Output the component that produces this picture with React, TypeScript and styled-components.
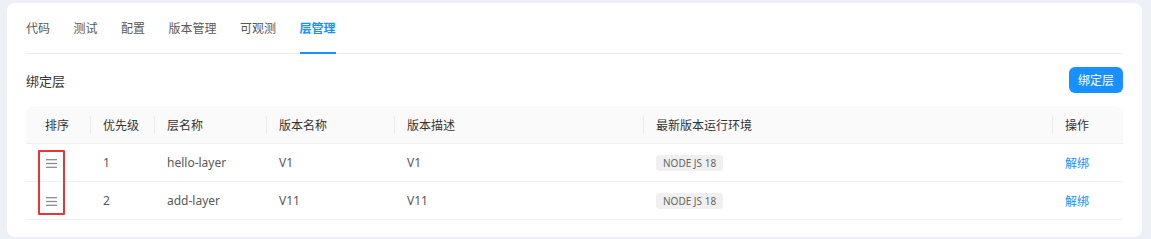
import styled, { createGlobalStyle } from "styled-components";

const GlobalStyle = createGlobalStyle`
  html, body {
    margin: 0;
    padding: 0;
    background: #edf1f7;
    font-family: "Noto Sans", "Noto Sans CJK SC", sans-serif;
  }
`;

type Layer = {
  priority: number;
  name: string;
  version: string;
  desc: string;
  runtime: string;
};

const layers: Layer[] = [
  { priority: 1, name: "hello-layer", version: "V1", desc: "V1", runtime: "NODE JS 18" },
  { priority: 2, name: "add-layer", version: "V11", desc: "V11", runtime: "NODE JS 18" },
];

const tabs = ["代码", "测试", "配置", "版本管理", "可观测", "层管理"];

const columns = [
  { title: "排序", width: 64, center: true },
  { title: "优先级", width: 64 },
  { title: "层名称", width: 112 },
  { title: "版本名称", width: 128 },
  { title: "版本描述", width: 249 },
  { title: "最新版本运行环境", width: 409 },
  { title: "操作", width: 71 },
];

function DragHandle() {
  return (
    <svg width="11" height="9" viewBox="0 0 11 9">
      <g stroke="#8c8c8c" strokeWidth="1.3">
        <line x1="0" y1="0.7" x2="11" y2="0.7" />
        <line x1="0" y1="4.5" x2="11" y2="4.5" />
        <line x1="0" y1="8.3" x2="11" y2="8.3" />
      </g>
    </svg>
  );
}

export default function App() {
  return (
    <>
      <GlobalStyle />
      <Page>
        <Card>
          <TabBar>
            {tabs.map((t) => (
              <Tab key={t} active={t === "层管理"}>
                {t}
              </Tab>
            ))}
          </TabBar>

          <SectionHeader>
            <SectionTitle>绑定层</SectionTitle>
            <PrimaryButton>绑定层</PrimaryButton>
          </SectionHeader>

          <TableWrap>
            <Table>
              <colgroup>
                {columns.map((c) => (
                  <col key={c.title} style={{ width: c.width }} />
                ))}
              </colgroup>
              <thead>
                <tr>
                  {columns.map((c, i) => (
                    <Th key={c.title} center={c.center} divider={i > 0}>
                      {c.title}
                    </Th>
                  ))}
                </tr>
              </thead>
              <tbody>
                {layers.map((l) => (
                  <tr key={l.name}>
                    <HandleCell>
                      <DragHandle />
                    </HandleCell>
                    <Td>{l.priority}</Td>
                    <Td>{l.name}</Td>
                    <Td>{l.version}</Td>
                    <Td>{l.desc}</Td>
                    <Td>
                      <Tag>{l.runtime}</Tag>
                    </Td>
                    <Td>
                      <LinkText>解绑</LinkText>
                    </Td>
                  </tr>
                ))}
              </tbody>
            </Table>
            <Highlight />
          </TableWrap>
        </Card>
      </Page>
    </>
  );
}

const Page = styled.div`
  width: 1151px;
  height: 239px;
  box-sizing: border-box;
  padding: 3px 9px 2px 7px;
`;

const Card = styled.div`
  height: 100%;
  box-sizing: border-box;
  background: #fff;
  border-radius: 8px;
  padding: 0 19px;
`;

const TabBar = styled.div`
  display: flex;
  gap: 23.5px;
  height: 51px;
  border-bottom: 1px solid #ebedf0;
  box-sizing: border-box;
`;

const Tab = styled.div<{ active?: boolean }>`
  display: flex;
  align-items: center;
  padding-top: 1px;
  font-size: 12px;
  color: ${({ active }) => (active ? "#1890ff" : "#595959")};
  font-weight: ${({ active }) => (active ? 600 : 400)};
  border-bottom: 2px solid ${({ active }) => (active ? "#1890ff" : "transparent")};
  margin-bottom: -1px;
`;

const SectionHeader = styled.div`
  display: flex;
  align-items: center;
  justify-content: space-between;
  padding-top: 13px;
  margin-bottom: 13px;
`;

const SectionTitle = styled.div`
  font-size: 13px;
  color: #333;
`;

const PrimaryButton = styled.button`
  height: 26px;
  width: 54px;
  border: none;
  border-radius: 6px;
  background: #1890ff;
  color: #fff;
  font-family: inherit;
  font-size: 12px;
  padding: 0;
  cursor: pointer;
`;

const TableWrap = styled.div`
  position: relative;
`;

const Table = styled.table`
  width: 100%;
  table-layout: fixed;
  border-collapse: separate;
  border-spacing: 0;
  font-size: 12px;
`;

const Th = styled.th<{ center?: boolean; divider?: boolean }>`
  position: relative;
  height: 37px;
  padding: ${({ center }) => (center ? "0 14px 0 12px" : "0 12px 0 13px")};
  background: #fafafa;
  border-bottom: 1px solid #f0f0f0;
  color: #333;
  font-weight: 400;
  text-align: ${({ center }) => (center ? "center" : "left")};

  &:first-child {
    border-top-left-radius: 8px;
  }
  &:last-child {
    border-top-right-radius: 8px;
  }

  &::before {
    content: "";
    display: ${({ divider }) => (divider ? "block" : "none")};
    position: absolute;
    left: 0;
    top: 50%;
    width: 1px;
    height: 18px;
    transform: translateY(-50%);
    background: #ececec;
  }
`;

const Td = styled.td`
  height: 37px;
  padding: 0 12px 0 13px;
  border-bottom: 1px solid #f0f0f0;
  color: #595959;
  text-align: left;
  vertical-align: middle;
`;

const HandleCell = styled(Td)`
  height: 35px;
  padding-left: 20px;
  padding-top: 2px;
  line-height: 0;
`;

const Tag = styled.span`
  display: inline-block;
  height: 16px;
  line-height: 16px;
  padding: 0 7px;
  background: #f0f0f0;
  border-radius: 3px;
  font-size: 10px;
  color: #666;
`;

const LinkText = styled.span`
  color: #1890ff;
  cursor: pointer;
`;

/* red annotation box drawn over the drag handles */
const Highlight = styled.div`
  position: absolute;
  left: 12px;
  top: 44px;
  width: 27px;
  height: 65px;
  box-sizing: border-box;
  border: 2px solid #ee3338;
  border-radius: 1px;
  pointer-events: none;
`;
